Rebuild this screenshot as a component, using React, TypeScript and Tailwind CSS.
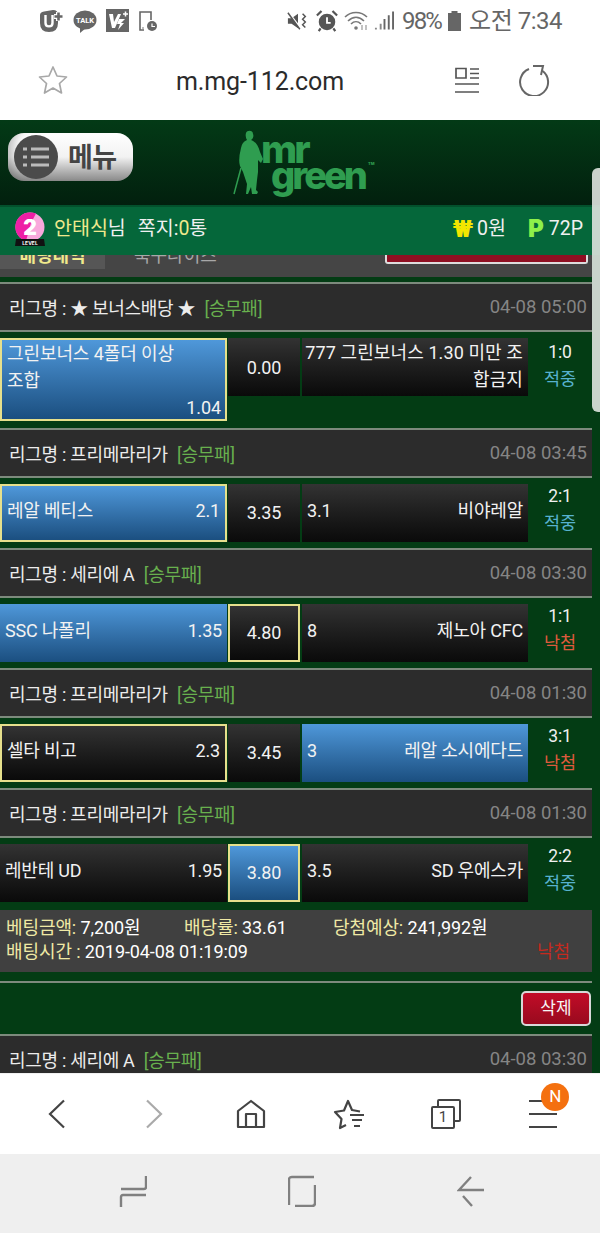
const font = { fontFamily: '"Roboto", "Noto Sans CJK KR", sans-serif' };

type Match = {
  league: string;
  date: string;
  home: string;
  homeOdds: string;
  draw: string;
  awayOdds: string;
  away: string;
  score: string;
  result: "적중" | "낙첨";
  picked: "home" | "draw" | "away";
  won: "home" | "draw" | "away";
};

const matches: Match[] = [
  { league: "프리메라리가", date: "04-08 03:45", home: "레알 베티스", homeOdds: "2.1", draw: "3.35", awayOdds: "3.1", away: "비야레알", score: "2:1", result: "적중", picked: "home", won: "home" },
  { league: "세리에 A", date: "04-08 03:30", home: "SSC 나폴리", homeOdds: "1.35", draw: "4.80", awayOdds: "8", away: "제노아 CFC", score: "1:1", result: "낙첨", picked: "draw", won: "home" },
  { league: "프리메라리가", date: "04-08 01:30", home: "셀타 비고", homeOdds: "2.3", draw: "3.45", awayOdds: "3", away: "레알 소시에다드", score: "3:1", result: "낙첨", picked: "home", won: "away" },
  { league: "프리메라리가", date: "04-08 01:30", home: "레반테 UD", homeOdds: "1.95", draw: "3.80", awayOdds: "3.5", away: "SD 우에스카", score: "2:2", result: "적중", picked: "draw", won: "draw" },
];

function cellClass(won: boolean, picked: boolean) {
  const bg = won
    ? "bg-gradient-to-b from-[#4f98da] to-[#1b4f80]"
    : "bg-gradient-to-b from-[#333333] to-[#0a0a0a]";
  const border = picked ? "border-2 border-[#e6e08c]" : "";
  return `${bg} ${border}`;
}

function LeagueHeader({ league, date }: { league: string; date: string }) {
  return (
    <div className="border-t-2 border-[#7d8a7d]">
      <div className="flex justify-between items-center h-[46px] bg-[#2c2c2c] pl-[9px] pr-[5px] pt-[2px] text-[18px] tracking-[-0.3px]">
        <div className="text-[#ececec] whitespace-nowrap">
          리그명 : {league} <span className="text-[#68b04e] ml-[5px]">[승무패]</span>
        </div>
        <div className="text-[#858585] text-[18.5px] tracking-[0]">{date}</div>
      </div>
    </div>
  );
}

function Score({ score, result, top = "-mt-[1px]" }: { score: string; result: string; top?: string }) {
  return (
    <div className={`w-[64px] shrink-0 flex flex-col items-center text-[17.5px] leading-[27px] ${top}`}>
      <div className="text-[#f0f0f0]">{score}</div>
      <div className={result === "적중" ? "text-[#58b2cf]" : "text-[#dd5a3c]"}>{result}</div>
    </div>
  );
}

function MatchRow({ m }: { m: Match }) {
  return (
    <div>
      <LeagueHeader league={m.league} date={m.date} />
      <div className="border-t-2 border-[#7d8a7d] bg-[#033c14] h-[72px] pt-[6px] flex text-[#f2f2f2] text-[18px] tracking-[-0.2px]">
        <div className={`w-[227px] h-[58px] flex items-center justify-between pl-[5px] pr-[5px] pb-[6px] ${cellClass(m.won === "home", m.picked === "home")}`}>
          <span>{m.home}</span>
          <span>{m.homeOdds}</span>
        </div>
        <div className={`ml-[1px] w-[72px] h-[58px] flex items-center justify-center pb-[2px] ${cellClass(m.won === "draw", m.picked === "draw")}`}>
          {m.draw}
        </div>
        <div className={`ml-[2px] w-[226px] h-[58px] flex items-center justify-between pl-[5px] pr-[5px] pb-[6px] ${cellClass(m.won === "away", m.picked === "away")}`}>
          <span>{m.awayOdds}</span>
          <span>{m.away}</span>
        </div>
        <Score score={m.score} result={m.result} />
      </div>
    </div>
  );
}

function BonusRow() {
  return (
    <div>
      <LeagueHeader league="★ 보너스배당 ★" date="04-08 05:00" />
      <div className="border-t-2 border-[#7d8a7d] bg-[#033c14] h-[98px] pt-[6px] flex items-start text-[#f2f2f2] text-[18px] leading-[27px] tracking-[-0.1px]">
        <div className="w-[227px] h-[83px] border-2 border-[#e6e08c] bg-gradient-to-b from-[#4f98da] to-[#1b4f80] pl-[5px] pr-[4px]">
          <div>그린보너스 4폴더 이상</div>
          <div>조합</div>
          <div className="text-right">1.04</div>
        </div>
        <div className={`ml-[1px] w-[72px] h-[58px] flex items-center justify-center ${cellClass(false, false)}`}>0.00</div>
        <div className={`ml-[2px] w-[226px] h-[58px] text-right pl-[3px] pr-[5px] pt-[1px] tracking-[0.1px] ${cellClass(false, false)}`}>
          <div className="whitespace-nowrap">777 그린보너스 1.30 미만 조</div>
          <div>합금지</div>
        </div>
        <Score score="1:0" result="적중" top="mt-[1px]" />
      </div>
    </div>
  );
}

function StatusIcons() {
  return (
    <div className="flex items-center gap-[9px] text-[#666666]">
      <svg width="25" height="24" viewBox="0 0 25 24">
        <path d="M1 6 Q1 3 5 2.5 L14 1 Q19 1 19 6 V14 Q19 23 10 23 Q1 23 1 14 Z" fill="#666" />
        <path d="M6.5 6 V14 C6.5 18.5 13.5 18.5 13.5 14 V6" fill="none" stroke="#fff" strokeWidth="2.4" />
        <path d="M15 7.5 h9 M19.5 3 v9" stroke="#fff" strokeWidth="5" />
        <path d="M15.5 7.5 h8 M19.5 3.5 v8" stroke="#666" strokeWidth="2.6" />
      </svg>
      <svg width="24" height="24" viewBox="0 0 24 24">
        <ellipse cx="12" cy="11" rx="11.5" ry="9.5" fill="#666" />
        <path d="M7 18 L7 24 L13 19 Z" fill="#666" />
        <text x="12" y="14" textAnchor="middle" fontSize="7.5" fontWeight="700" fill="#fff" fontFamily="Roboto">TALK</text>
      </svg>
      <div className="w-[23px] h-[23px] bg-[#666666] relative overflow-hidden">
        <svg width="23" height="23" viewBox="0 0 23 23">
          <path d="M3 5 H7 L8 13 L12 5 H15 L9 19 H6 Z" fill="#fff" />
          <path d="M13 10 H19 L15 14 H18 L12 21 L14 15 H11 Z" fill="#fff" />
          <path d="M17 5 h5 M19.5 2.5 v5" stroke="#fff" strokeWidth="1.5" />
        </svg>
      </div>
      <svg width="20" height="22" viewBox="0 0 20 22" fill="none">
        <path d="M6 20 H2 V2 H13 V10" stroke="#666" strokeWidth="1.6" />
        <circle cx="5" cy="18" r="0.8" fill="#666" />
        <circle cx="14" cy="16" r="5" fill="#666" />
        <path d="M14 13.5 V16.5 H17" stroke="#fff" strokeWidth="1.2" />
      </svg>
    </div>
  );
}

function StatusRight() {
  return (
    <div className="flex items-center text-[#666666]">
      <svg width="22" height="22" viewBox="0 0 24 22" className="mr-[7px]">
        <path d="M1 8 H5 L12 3 V19 L5 14 H1 Z" fill="#555" />
        <path d="M1 1 L15 19" stroke="#fff" strokeWidth="2" />
        <path d="M1 2 L14 20" stroke="#555" strokeWidth="1.6" />
        <path d="M17 3 L20 6 L17 9 L20 12 L17 15 L20 18" stroke="#555" strokeWidth="1.6" fill="none" />
      </svg>
      <svg width="22" height="22" viewBox="0 0 24 24" className="mr-[6px]">
        <circle cx="12" cy="13" r="9" fill="#555" />
        <path d="M12 8 V14 H16" stroke="#fff" strokeWidth="2" fill="none" />
        <path d="M1 6 L6 1 M18 1 L23 6 M5 20 L3 23 M19 20 L21 23" stroke="#555" strokeWidth="2.4" />
      </svg>
      <svg width="26" height="22" viewBox="0 0 26 22" fill="none" className="mr-[4px]">
        <path d="M1 7 C7 1 17 1 23 7" stroke="#777" strokeWidth="1.6" />
        <path d="M4 11 C9 6 15 6 20 11" stroke="#777" strokeWidth="1.6" />
        <path d="M7 14 C10 11 14 11 17 14" stroke="#777" strokeWidth="1.6" />
        <circle cx="12" cy="18" r="1.8" fill="#777" />
        <path d="M18 15 v5 M22 20 v-5" stroke="#999" strokeWidth="1.2" />
      </svg>
      <svg width="20" height="22" viewBox="0 0 21 22" className="mr-[8px]">
        <path d="M1 20 h2 v-2 h-2 Z M6 20 h2 v-6 h-2 Z" fill="#888" />
        <path d="M11 20 V9 M15.5 20 V5 M20 20 V1" stroke="#666" strokeWidth="2" />
      </svg>
      <span className="text-[24px] tracking-[-1.8px] mr-[6px]">98%</span>
      <svg width="15" height="20" viewBox="0 0 15 20" className="mr-[7px]">
        <path d="M4.5 0 H10.5 V2 H14 V20 H1 V2 H4.5 Z" fill="#666" />
      </svg>
      <span className="text-[24px] tracking-[-0.5px]">오전 7:34</span>
    </div>
  );
}

function Logo() {
  return (
    <div className="flex items-start text-[#2f9d50] ml-[100px] mt-[10px]">
      <svg width="30" height="66" viewBox="0 0 30 66" fill="#2f9d50">
        <path d="M13 3 C14 0 20 0 20 4 C21 6 20 9 18 10 C21 11 25 14 27 22 L30 29 L28 33 L25 30 L25 42 L24 50 L23 60 L25 62 L24 64 L19 64 L18 57 L15 64 L13 64 L14 54 L10 42 L7 36 Q5 30 8 18 Q9 12 14 10 Q12 7 13 3 Z" />
        <path d="M8 38 L1 64" stroke="#2f9d50" strokeWidth="1.5" />
      </svg>
      <div className="flex flex-col font-extrabold" style={{ fontFamily: "Inter, sans-serif" }}>
        <div className="text-[39px] leading-[22px] tracking-[-3px] mt-[8px] -ml-[2px]">mr</div>
        <div className="flex items-start ml-[8px] -mt-[2px]">
          <span className="text-[38px] leading-[34px] tracking-[-3px]">green</span>
          <span className="text-[4px] ml-[3px] mt-[3px]">TM</span>
        </div>
      </div>
    </div>
  );
}

function Badge() {
  return (
    <div className="relative w-[32px] h-[36px] shrink-0">
      <svg width="32" height="36" viewBox="0 0 32 36">
        <circle cx="16" cy="16" r="14.5" fill="#f9a8dc" />
        <path d="M16 1.5 A14.5 14.5 0 0 0 12 30 L17 12 L22 2.5 A14.5 14.5 0 0 0 16 1.5 Z" fill="#ee1fa5" />
        <text x="16" y="24" textAnchor="middle" fontSize="21" fontWeight="900" fill="#fff" fontFamily="Inter">2</text>
        <path d="M2 28 H30 L31 35 H1 Z" fill="#111" />
        <text x="16" y="33.5" textAnchor="middle" fontSize="5" fontWeight="700" fill="#fff" fontFamily="Inter">LEVEL</text>
      </svg>
    </div>
  );
}

export default function App() {
  return (
    <div className="w-[600px] h-[1233px] flex flex-col overflow-hidden bg-white relative" style={font}>
      <div className="h-[40px] flex items-center justify-between pl-[39px] pr-[38px] pt-[1px]">
        <StatusIcons />
        <StatusRight />
      </div>

      <div className="h-[80px] flex items-center">
        <svg width="30" height="30" viewBox="0 0 30 30" fill="none" className="ml-[38px]">
          <path d="M15 2 L19 11 L28.5 12 L21.5 18.5 L23.5 28 L15 23 L6.5 28 L8.5 18.5 L1.5 12 L11 11 Z" stroke="#a8a8a8" strokeWidth="1.7" strokeLinejoin="round" />
        </svg>
        <div className="w-[320px] text-center text-[25px] text-[#2b2b2b] ml-[32px] pt-[3px] tracking-[-0.1px]">m.mg-112.com</div>
        <svg width="26" height="28" viewBox="0 0 26 28" fill="none" stroke="#555" strokeWidth="1.7" className="ml-[34px]">
          <path d="M2 2.5 H12 V12 H2 Z M16 3 H25 M16 7.5 H25 M16 12 H25" />
          <path d="M1 18 H25 M1 26 H25" />
        </svg>
        <svg width="32" height="32" viewBox="0 0 32 32" fill="none" stroke="#666" strokeWidth="2" className="ml-[38px]">
          <path d="M11 5 A14 14 0 1 0 24 6.5" />
          <path d="M15 2 H25 L23 11" />
        </svg>
      </div>

      <div className="h-[953px] overflow-hidden bg-[#033c14] relative shrink-0">
        <div className="h-[85px] flex items-start bg-gradient-to-b from-[#033a16] to-[#02200e]">
          <button className="ml-[8px] mt-[13px] w-[125px] h-[48px] rounded-[16px] bg-gradient-to-b from-white via-[#f2f2f2] to-[#8a8a8a] flex items-center pl-[6px] shadow-[inset_12px_0_10px_-8px_rgba(0,0,0,0.25)]">
            <span className="w-[44px] h-[44px] rounded-full bg-[#4b4b4b] flex items-center justify-center shrink-0">
              <svg width="28" height="22" viewBox="0 0 28 22" stroke="#bbbbbb" strokeWidth="3">
                <path d="M1 3 H5 M1 11 H5 M1 19 H5 M9 3 H27 M9 11 H27 M9 19 H27" />
              </svg>
            </span>
            <span className="ml-[10px] text-[27px] font-bold text-[#444444] pt-[3px] tracking-[-0.5px]">메뉴</span>
          </button>
          <Logo />
        </div>

        <div className="h-[50px] bg-[#05673a] border-t-2 border-[#03512c] flex items-center pl-[14px] pr-[17px] pb-[5px] text-[19.5px] text-[#f0f0f0]">
          <Badge />
          <span className="text-[#efe98c] ml-[8px]">안태식</span>
          <span>님</span>
          <span className="ml-[12px]">쪽지:</span>
          <span className="text-[#efe98c]">0</span>
          <span>통</span>
          <span className="ml-auto text-[#f3e600] font-black text-[24px] mr-[4px]">₩</span>
          <span>0원</span>
          <span className="ml-[22px] text-[#8ef04a] font-black text-[24px] mr-[5px]" style={{ fontFamily: "Inter, sans-serif" }}>P</span>
          <span>72P</span>
        </div>

        <div className="h-[22px] bg-[#454545] flex items-start overflow-hidden text-[18px] mr-[8px]">
          <div className="w-[105px] h-[22px] bg-[#565656] text-center text-[#efe98c] font-bold leading-[18px] -mt-[8px] shrink-0">배팅내역</div>
          <div className="ml-[29px] w-[90px] text-[#a8a8a8] leading-[18px] -mt-[8px] shrink-0">묵구나이즈</div>
          <div className="ml-[161px] w-[203px] h-[9px] shrink-0 bg-[#8f0f22] border-2 border-t-0 border-[#dddddd] rounded-b-[3px]"></div>
        </div>

        <div className="h-[5px]"></div>

        <div className="w-[592px]">
          <BonusRow />
          {matches.map((m, i) => (
            <MatchRow key={i} m={m} />
          ))}

          <div className="h-[2px]"></div>
          <div className="bg-[#404040] h-[62px] pl-[6px] pt-[6px] text-[18px] leading-[24px] text-white tracking-[-0.1px]">
            <div className="flex">
              <div className="w-[178px]"><span className="text-[#efe9a5]">베팅금액:</span> 7,200원</div>
              <div className="w-[149px]"><span className="text-[#efe9a5]">배당률:</span> 33.61</div>
              <div><span className="text-[#efe9a5]">당첨예상:</span> 241,992원</div>
            </div>
            <div className="flex justify-between pr-[22px]">
              <div><span className="text-[#efe9a5]">배팅시간 :</span> 2019-04-08 01:19:09</div>
              <div className="text-[#c52a1e]">낙첨</div>
            </div>
          </div>

          <div className="h-[9px]"></div>
          <div className="border-t-2 border-[#7d8a7d] h-[53px] flex justify-end pt-[8px]">
            <button className="w-[70px] h-[35px] mr-[1px] rounded-[5px] bg-gradient-to-b from-[#c20c28] to-[#980a1e] border-2 border-[#d8d8d8] text-[#f6f6f6] text-[17px]">삭제</button>
          </div>
          <LeagueHeader league="세리에 A" date="04-08 03:30" />
        </div>

        <div className="absolute right-0 top-[48px] w-[8px] h-[244px] bg-[#dfe3df]/90 rounded-l-[6px]"></div>
      </div>

      <div className="h-[81px] bg-white flex items-center px-[8px] border-t border-[#f0f0f0]">
        <div className="flex-1 flex justify-center">
          <svg width="18" height="30" viewBox="0 0 18 30" fill="none" stroke="#444" strokeWidth="2.2"><path d="M16 1.5 L2 15 L16 28.5" /></svg>
        </div>
        <div className="flex-1 flex justify-center">
          <svg width="18" height="30" viewBox="0 0 18 30" fill="none" stroke="#aaa" strokeWidth="2.2"><path d="M2 1.5 L16 15 L2 28.5" /></svg>
        </div>
        <div className="flex-1 flex justify-center">
          <svg width="30" height="30" viewBox="0 0 30 30" fill="none" stroke="#444" strokeWidth="2.2" strokeLinejoin="round"><path d="M15 2 L28 12 V28 H2 V12 Z M10 28 V15 H20 V28" /></svg>
        </div>
        <div className="flex-1 flex justify-center">
          <svg width="32" height="32" viewBox="0 0 32 32" fill="none" stroke="#444" strokeWidth="2.2" strokeLinejoin="round">
            <path d="M13 27 L7 30 L8.5 21 L2 14 L11 12.5 L15 3 L19 12 L27 13.5" />
            <path d="M17 17 H31 M19 22 H29 M21 28 H27" />
          </svg>
        </div>
        <div className="flex-1 flex justify-center">
          <div className="relative w-[30px] h-[30px]">
            <div className="absolute right-0 top-0 w-[24px] h-[23px] border-2 border-[#444] rounded-[2px]"></div>
            <div className="absolute left-0 bottom-0 w-[24px] h-[23px] border-2 border-[#444] rounded-[2px] bg-white text-[15px] leading-[19px] text-center text-[#444]">1</div>
          </div>
        </div>
        <div className="flex-1 flex justify-center">
          <div className="relative w-[28px] h-[30px] flex flex-col justify-between pt-[1px] pb-[1px]">
            <div className="h-[2px] bg-[#444]"></div>
            <div className="h-[2px] bg-[#444]"></div>
            <div className="h-[2px] bg-[#444]"></div>
            <div className="absolute -right-[12px] -top-[16px] w-[28px] h-[28px] rounded-full bg-[#f4700f] text-white text-[17px] flex items-center justify-center">N</div>
          </div>
        </div>
      </div>

      <div className="flex-1 bg-[#efefef] flex items-center justify-center gap-[141px] pb-[5px] pl-[4px]">
        <svg width="28" height="32" viewBox="0 0 28 32" fill="none" stroke="#808080" strokeWidth="2.4">
          <path d="M27 1 V12 Q27 14 25 14 H2 M27 20 H4 Q2 20 2 22 V32" />
        </svg>
        <svg width="28" height="32" viewBox="0 0 28 32" fill="none" stroke="#808080" strokeWidth="2.4">
          <path d="M26 2 H4 Q1 2 1 5 V30 M7 31 H24 Q27 31 27 28 V10" />
        </svg>
        <svg width="28" height="32" viewBox="0 0 28 32" fill="none" stroke="#808080" strokeWidth="2.4">
          <path d="M14 2 L2 15 H27 M6 21 L15 31" />
        </svg>
      </div>
    </div>
  );
}
